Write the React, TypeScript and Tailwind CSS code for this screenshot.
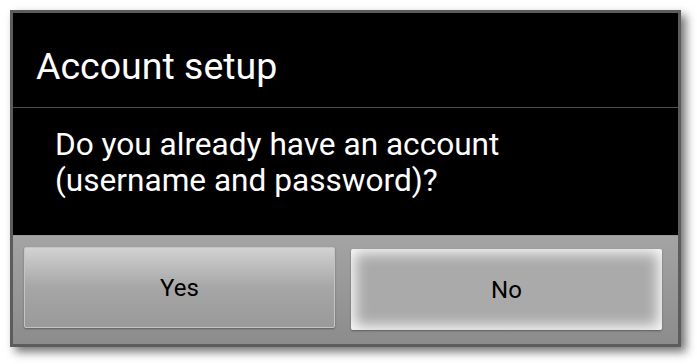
import React from "react";

const roboto = { fontFamily: "Roboto, 'Noto Sans', Arial, sans-serif" };

export default function App() {
  return (
    <div className="w-[697px] h-[364px] bg-white pt-[10px] pl-[10px]" style={roboto}>
      {/* dialog frame */}
      <div className="w-[671px] h-[337px] flex flex-col border-[3px] border-[#5c5c5c] bg-black shadow-[5px_5px_9px_rgba(0,0,0,0.55)]">
        {/* title */}
        <div className="h-[95px] pt-[35px] pl-[23px] border-b border-[#4d4d4d]">
          <h1 className="text-[37.5px] leading-[36px] text-white">Account setup</h1>
        </div>

        {/* message */}
        <div className="h-[127px] pt-[19px] pl-[42px]">
          <p className="text-[31.6px] leading-[36px] text-white">
            Do you already have an account
            <br />
            (username and password)?
          </p>
        </div>

        {/* buttons */}
        <div className="flex-1 flex items-start gap-[16px] pl-[11px] pt-[11px] bg-gradient-to-b from-[#a4a4a4] to-[#8c8c8c] border-t border-[#9a9a9a]">
          <button className="w-[311px] h-[81px] rounded-[2px] border border-[#c4c4c4] bg-gradient-to-b from-[#d2d2d2] via-[#a6a6a6] to-[#9a9a9a] shadow-[0_1px_2px_rgba(0,0,0,0.35)] text-[24px] text-black">
            Yes
          </button>
          <button className="mt-[2px] w-[311px] h-[81px] rounded-[2px] bg-[#aaaaaa] shadow-[inset_0_0_14px_4px_rgba(255,255,255,0.95),0_1px_2px_rgba(0,0,0,0.35)] text-[24px] text-black">
            No
          </button>
        </div>
      </div>
    </div>
  );
}
